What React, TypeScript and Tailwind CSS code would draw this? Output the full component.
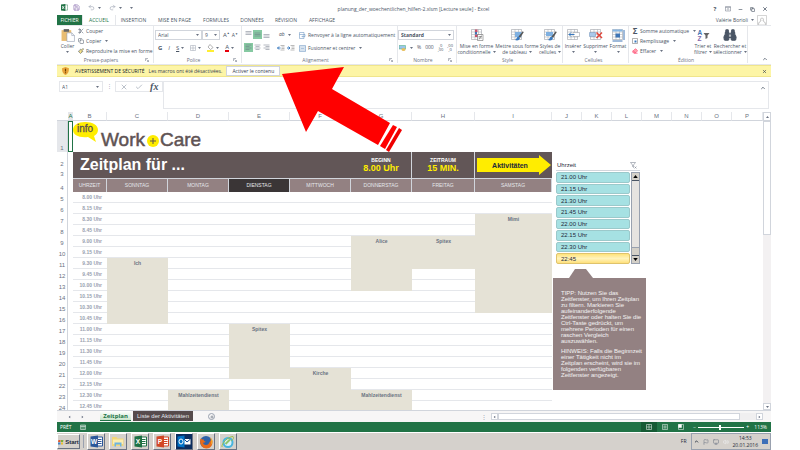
import React from "react";
import type { ReactNode } from "react";
import {
  Scissors,
  Copy,
  Paintbrush,
  Undo2,
  Redo2,
  Save,
  X,
  Check,
  Minus,
  Binoculars,
  Eraser,
  ChevronUp,
  Plus,
  Flag,
  Volume2,
  Monitor,
} from "lucide-react";

const SANS = "font-['Liberation_Sans',Arial,sans-serif]";
const UI = "font-['Open_Sans','Noto_Sans',sans-serif]";

function Caret() {
  return (
    <svg viewBox="0 0 6 4" className="h-[2px] w-[3px] shrink-0 fill-gray-500" aria-hidden="true">
      <path d="M0 0h6L3 4z" />
    </svg>
  );
}

function Launcher() {
  return (
    <svg viewBox="0 0 8 8" className="size-1 shrink-0 fill-none stroke-gray-500" aria-hidden="true">
      <path d="M1 6V1h5M3 3l4 4M7 4v3H4" />
    </svg>
  );
}

function Group({ label, className, launcher, children }: { label: string; className: string; launcher?: boolean; children: ReactNode }) {
  return (
    <section aria-label={label} className={`flex shrink-0 flex-col border-r border-gray-200 ${className}`}>
      <div className="flex min-h-0 flex-1">{children}</div>
      <div className="flex h-[6px] items-center pr-1 leading-none text-gray-500">
        <span className="flex-1 text-center">{label}</span>
        {launcher && <Launcher />}
      </div>
    </section>
  );
}

function BigButton({ icon, lines, className }: { icon: ReactNode; lines: string[]; className: string }) {
  const single = lines.length === 1;
  return (
    <button type="button" className={`flex shrink-0 flex-col items-center pt-[2px] leading-[6px] whitespace-nowrap ${className}`}>
      {icon}
      <span className="mt-px">{lines[0]}</span>
      <span className="flex h-[6px] items-center gap-[2px]">
        {!single && lines[1]}
        <Caret />
      </span>
    </button>
  );
}

function SmallButton({ icon, label, caret, className }: { icon: ReactNode; label: string; caret?: boolean; className?: string }) {
  return (
    <button type="button" className={`flex items-center gap-[2px] leading-none whitespace-nowrap ${className ?? "h-[10px]"}`}>
      {icon}
      <span>{label}</span>
      {caret && <span className="pl-[2px]"><Caret /></span>}
    </button>
  );
}

function PasteIcon() {
  return (
    <svg viewBox="0 0 26 26" className="size-[14px]" aria-hidden="true">
      <path d="M1 4h18v20H1z" fill="#e9bd72" />
      <path d="M5 2h10v5H5z" fill="#666" />
      <path d="M11 9h9l5 5v11H11z" fill="#fff" stroke="#8894a8" />
      <path d="M20 9v5h5" fill="none" stroke="#8894a8" />
    </svg>
  );
}

function GridIcon({ kind }: { kind: "cond" | "table" | "cell" | "insert" | "delete" | "format" }) {
  const styled = kind === "table" || kind === "cell";
  return (
    <svg viewBox="0 0 28 28" className="size-[14px]" aria-hidden="true">
      <path d="M3 3h20v20H3z" fill="#fff" stroke="#8b8f96" />
      <path d="M3 8h20M3 13h20M3 18h20M10 3v20M17 3v20" stroke="#a0a4aa" fill="none" />
      {kind === "cond" && (
        <>
          <path d="M10 3h5v5h-5zM10 13h7v5h-7z" fill="#c8506a" />
          <path d="M10 8h4v5h-4z" fill="#3f75b5" />
          <path d="M15 13h11v12H15z" fill="#fff" stroke="#555" />
          <path d="M17 17h7M17 20h7M18 23l5-8" stroke="#555" fill="none" />
        </>
      )}
      {styled && (
        <>
          <path d={kind === "table" ? "M10 8h13v10H10z" : "M6 8h14v8H6z"} fill="#7fb0e0" />
          <path d="M26 6l-9 11 3 3 7-11z" fill="#555" />
          <path d="M17 17c-4 1-3 5-7 7 4 2 9 1 10-4z" fill="#3878bd" />
        </>
      )}
      {kind === "insert" && (
        <>
          <path d="M14 9h13v8H14z" fill="#fff" stroke="#8b8f96" />
          <path d="M17 13H6m4-4l-4 4 4 4" stroke="#3878bd" strokeWidth="2" fill="none" />
        </>
      )}
      {kind === "delete" && (
        <>
          <path d="M1 9h12v8H1z" fill="#a8c8ea" stroke="#6d8fb5" />
          <path d="M15 9l11 11M26 9L15 20" stroke="#e0453a" strokeWidth="3" />
        </>
      )}
      {kind === "format" && (
        <>
          <path d="M3 3h20v4H3z" fill="#86b6e4" />
          <path d="M9 11h9v8H9z" fill="#3f75b5" />
          <path d="M26 4v20M3 26h20" stroke="#3f75b5" strokeWidth="2" />
        </>
      )}
    </svg>
  );
}

function AlignIcon({ variant, active }: { variant: "top" | "middle" | "bottom" | "left" | "center" | "right"; active?: boolean }) {
  const paths = {
    top: "M3 3h12M3 6h12M3 9h12",
    middle: "M3 6h12M3 9h12M3 12h12",
    bottom: "M3 9h12M3 12h12M3 15h12",
    left: "M3 4h12M3 7h8M3 10h12M3 13h8",
    center: "M3 4h12M5 7h8M3 10h12M5 13h8",
    right: "M3 4h12M7 7h8M3 10h12M7 13h8",
  };
  return (
    <button type="button" aria-label={variant} className={`grid size-[9px] shrink-0 place-items-center ${active ? "bg-[#86c9a2]" : ""}`}>
      <svg viewBox="0 0 18 18" className="size-[9px] fill-none stroke-gray-500" aria-hidden="true">
        <path d={paths[variant]} />
      </svg>
    </button>
  );
}

function IndentIcon({ flip }: { flip?: boolean }) {
  return (
    <svg viewBox="0 0 16 12" className="h-[6px] w-2" aria-hidden="true">
      <path d="M7 1h8M9 4h6M9 7h6M7 10h8" stroke="#777" fill="none" />
      <path d={flip ? "M0 6h6M3 3l3 3-3 3" : "M7 6H1M4 3L1 6l3 3"} stroke="#3878bd" strokeWidth="2" fill="none" />
    </svg>
  );
}

function TitleBar() {
  return (
    <header className="flex h-[15px] shrink-0 items-center pl-1 leading-none text-gray-600">
      <svg viewBox="0 0 16 16" className="size-[7px]" aria-hidden="true">
        <path d="M8 2h7v12H8z" fill="#fff" stroke="#217346" />
        <path d="M0 1l10-1v16L0 15z" fill="#217346" />
        <path d="M3 5l4 6M7 5l-4 6" stroke="#fff" strokeWidth="2" />
      </svg>
      <div className="ml-[5px] flex items-center gap-2">
        <Save className="size-[7px] text-[#8568ac]" />
        <span className="flex items-center gap-[3px]"><Undo2 className="size-[7px] text-gray-400" /><Caret /></span>
        <span className="flex items-center gap-[3px]"><Redo2 className="size-[7px] text-gray-400" /><Caret /></span>
        <Caret />
      </div>
      <h1 className="flex-1 pt-[3px] pl-[108px] text-center">planung_der_woechentlichen_hilfen-2.xlsm [Lecture seule] - Excel</h1>
      <div className="ml-[126px] flex items-center gap-[7px] pt-[3px] pr-[3px]">
        <button type="button" className="w-[6px] text-[6px] leading-none font-bold">?</button>
        <button type="button" aria-label="Options du ruban">
          <svg viewBox="0 0 12 12" className="size-[6px] fill-none stroke-gray-500"><path d="M1 1h10v9H1zM1 3h10M6 9V5M4 7l2-2 2 2" /></svg>
        </button>
        <button type="button" aria-label="Réduire"><Minus className="size-[5px]" strokeWidth={3} /></button>
        <button type="button" aria-label="Restaurer"><Copy className="size-[5px]" strokeWidth={3} /></button>
        <button type="button" aria-label="Fermer"><X className="size-[6px]" strokeWidth={3} /></button>
      </div>
    </header>
  );
}

function TabBar() {
  return (
    <nav className="flex h-[10px] shrink-0 items-stretch leading-none text-gray-600">
      <button type="button" className="w-[25px] bg-[#217346] text-white">FICHIER</button>
      <button type="button" className="w-[34px] border-x border-gray-200 text-[#217346]">ACCUEIL</button>
      <button type="button" className="w-[35px]">INSERTION</button>
      <button type="button" className="w-[47px]">MISE EN PAGE</button>
      <button type="button" className="w-[36px]">FORMULES</button>
      <button type="button" className="w-[36px]">DONNÉES</button>
      <button type="button" className="w-[32px]">RÉVISION</button>
      <button type="button" className="w-[40px]">AFFICHAGE</button>
      <div className="flex flex-1 items-center justify-end gap-[3px] pr-1">
        <span>Valérie Borioli</span>
        <Caret />
        <svg viewBox="0 0 20 20" className="size-[10px]" aria-hidden="true">
          <path d="M1 1h18v18H1z" fill="#fff" stroke="#aaa" />
          <path d="M3 19c0-5 3-6 5-7-4-8 8-8 4 0 2 1 5 2 5 7" fill="#fff" stroke="#888" />
        </svg>
      </div>
    </nav>
  );
}

function Select({ label, value, className }: { label: string; value: string; className: string }) {
  return (
    <div className={`flex h-[10px] items-center border border-gray-300 pr-[2px] ${className}`}>
      <select aria-label={label} defaultValue={value} className="w-full appearance-none bg-transparent pl-[2px] leading-none outline-none">
        <option>{value}</option>
      </select>
      <Caret />
    </div>
  );
}

function Ribbon() {
  return (
    <div className="flex h-[40px] shrink-0 border-y border-gray-200 pb-px leading-none text-gray-600">
      <Group label="Presse-papiers" launcher className="w-[97px]">
        <BigButton icon={<PasteIcon />} lines={["Coller"]} className="w-[21px]" />
        <div>
          <SmallButton icon={<Scissors className="size-[6px]" />} label="Couper" />
          <SmallButton icon={<Copy className="size-[6px]" />} label="Copier" caret />
          <SmallButton icon={<Paintbrush className="size-[6px] fill-amber-200" />} label="Reproduire la mise en forme" />
        </div>
      </Group>
      <Group label="Police" launcher className="w-[88px]">
        <div className="flex-1 pt-1 pl-px">
          <div className="flex items-center">
            <Select label="Police" value="Arial" className="w-[47px]" />
            <Select label="Taille" value="9" className="w-[18px]" />
            <button type="button" className="ml-[3px] flex text-[6px]">A<span className="text-[3px]">▲</span></button>
            <button type="button" className="ml-[2px] flex">A<span className="text-[3px]">▼</span></button>
          </div>
          <div className="flex h-[16px] items-center gap-[6px] pl-[3px] text-[6px]">
            <button type="button" className="font-bold">G</button>
            <button type="button" className="italic">I</button>
            <button type="button" className="flex items-center gap-[2px] underline">S<Caret /></button>
            <button type="button" aria-label="Bordures" className="flex items-center gap-[2px]">
              <svg viewBox="0 0 12 12" className="size-[6px] fill-none stroke-gray-400"><path d="M1 1h10v10H1zM1 6h10M6 1v10" /></svg>
              <Caret />
            </button>
            <button type="button" aria-label="Remplissage" className="flex items-center gap-[2px]">
              <svg viewBox="0 0 14 16" className="h-2 w-[7px]"><path d="M6 1l6 6-5 4-5-5z" fill="#fff" stroke="#666" /><path d="M0 12h14v4H0z" fill="#ffee32" /></svg>
              <Caret />
            </button>
            <button type="button" className="flex items-center gap-[2px]"><span className="border-b-2 border-red-600">A</span><Caret /></button>
          </div>
        </div>
      </Group>
      <Group label="Alignement" launcher className="w-[156px]">
        <div className="flex w-[55px] shrink-0 flex-col justify-start gap-1 pt-1 pl-[2px]">
          <div className="flex items-center">
            <AlignIcon variant="top" /><AlignIcon variant="middle" active /><AlignIcon variant="bottom" />
            <button type="button" className="ml-2 flex items-center gap-[3px] italic">ab<Caret /></button>
          </div>
          <div className="flex items-center">
            <AlignIcon variant="left" active /><AlignIcon variant="center" /><AlignIcon variant="right" />
            <span className="ml-[6px] flex gap-[2px]"><IndentIcon /><IndentIcon flip /></span>
          </div>
        </div>
        <div className="pt-1 pl-[2px]">
          <SmallButton
            icon={<svg viewBox="0 0 14 14" className="size-[7px] fill-none stroke-[#5a88bb]"><path d="M1 1h9v12H1zM1 5h11v4H6M8 7L6 9l2 2" /></svg>}
            label="Renvoyer à la ligne automatiquement"
          />
          <SmallButton
            icon={<svg viewBox="0 0 14 14" className="size-[7px] fill-none stroke-[#5a88bb]"><path d="M1 1h12v12H1zM1 4h12M1 10h12M3 7h8" /></svg>}
            label="Fusionner et centrer"
            caret
            className="h-[16px]"
          />
        </div>
      </Group>
      <Group label="Nombre" launcher className="w-[59px]">
        <div className="flex-1 pt-1">
          <Select label="Format de nombre" value="Standard" className="w-[56px] font-bold" />
          <div className="flex h-[15px] items-center gap-1 pl-px">
            <svg viewBox="0 0 14 12" className="h-[6px] w-[7px]" aria-hidden="true"><path d="M0 1h13v7H0z" fill="#9ac5e8" stroke="#4a7" /><ellipse cx="9" cy="9" rx="4" ry="3" fill="#e8c060" /></svg>
            <Caret />
            <button type="button">%</button>
            <button type="button">000</button>
            <button type="button" className="text-[4px] leading-none">,0<br />,00</button>
            <button type="button" className="text-[4px] leading-none">,00<br />,0</button>
          </div>
        </div>
      </Group>
      <Group label="Style" className="w-[106px]">
        <BigButton icon={<GridIcon kind="cond" />} lines={["Mise en forme", "conditionnelle"]} className="w-[39px]" />
        <BigButton icon={<GridIcon kind="table" />} lines={["Mettre sous forme", "de tableau"]} className="w-[42px]" />
        <BigButton icon={<GridIcon kind="cell" />} lines={["Styles de", "cellules"]} className="w-[24px]" />
      </Group>
      <Group label="Cellules" className="w-[66px]">
        <BigButton icon={<GridIcon kind="insert" />} lines={["Insérer"]} className="w-[20px]" />
        <BigButton icon={<GridIcon kind="delete" />} lines={["Supprimer"]} className="w-[25px]" />
        <BigButton icon={<GridIcon kind="format" />} lines={["Format"]} className="w-[20px]" />
      </Group>
      <Group label="Édition" className="w-[119px]">
        <div className="w-[64px] shrink-0 pl-[3px]">
          <SmallButton icon={<span className="w-[6px] text-[8px] leading-none font-bold">Σ</span>} label="Somme automatique" caret />
          <SmallButton
            icon={<svg viewBox="0 0 12 12" className="size-[6px]"><path d="M1 1h10v10H1z" fill="#fff" stroke="#666" /><path d="M5 5h4v4H5z" fill="#3878bd" /></svg>}
            label="Remplissage"
            caret
          />
          <SmallButton icon={<Eraser className="size-[6px] fill-rose-300 text-rose-500" />} label="Effacer" caret />
        </div>
        <BigButton
          icon={
            <svg viewBox="0 0 28 28" className="size-[14px] shrink-0" aria-hidden="true">
              <text x="3" y="13" fontSize="13" fontWeight="bold" fontFamily="Liberation Sans" fill="#3f75b5">A</text>
              <text x="3" y="26" fontSize="13" fontWeight="bold" fontFamily="Liberation Sans" fill="#8568ac">Z</text>
              <path d="M15 10h12l-4 5v5l-4 2v-7z" fill="#666" />
            </svg>
          }
          lines={["Trier et", "filtrer"]}
          className="w-[20px]"
        />
        <BigButton icon={<Binoculars className="size-[14px] fill-gray-600 text-gray-600" />} lines={["Rechercher et", "sélectionner"]} className="w-[34px]" />
      </Group>
      <div className="flex flex-1 items-end justify-end pr-[3px] pb-px">
        <button type="button" aria-label="Réduire le ruban"><ChevronUp className="size-[6px]" strokeWidth={3} /></button>
      </div>
    </div>
  );
}

function SecurityBar() {
  return (
    <div className="flex h-[12px] shrink-0 items-center border-y border-[#f0e58c] bg-[#fdf5a6] leading-none text-gray-700">
      <svg viewBox="0 0 12 14" className="mr-[6px] ml-[5px] h-2 w-[7px]" aria-hidden="true">
        <path d="M6 0l6 2c0 6-1 9-6 12C1 11 0 8 0 2z" fill="#e8a33a" />
        <path d="M6 3v5M6 9v2" stroke="#6b4200" strokeWidth="2" />
      </svg>
      <strong className="pr-1 font-normal text-gray-900">AVERTISSEMENT DE SÉCURITÉ</strong>
      <span>Les macros ont été désactivées.</span>
      <button type="button" className="ml-1 h-[10px] w-[54px] border border-gray-300 bg-white whitespace-nowrap">Activer le contenu</button>
      <button type="button" aria-label="Fermer l'avertissement" className="mr-1 ml-auto"><X className="size-[5px]" strokeWidth={3} /></button>
    </div>
  );
}

function FormulaBar() {
  return (
    <div className="flex h-[32px] shrink-0 items-start pt-1 pl-[2px] text-gray-600">
      <div className="flex h-[11px] w-[44px] items-center border border-gray-200 pr-[3px]">
        <input aria-label="Zone Nom" defaultValue="A1" className="w-full min-w-0 pl-[2px] leading-none outline-none" />
        <Caret />
      </div>
      <span className="w-[12px] text-center leading-[10px] text-gray-400">⋮</span>
      <div className="flex h-[11px] w-[48px] items-center justify-around border border-gray-200">
        <X className="size-2 text-gray-400" />
        <Check className="size-2 text-gray-400" />
        <span className="font-['Liberation_Serif',serif] text-[10px] leading-none font-bold italic">fx</span>
      </div>
      <div className="mr-[2px] flex h-[28px] flex-1 border border-gray-200">
        <textarea aria-label="Barre de formule" className="flex-1 resize-none outline-none" />
        <ChevronUp className="mt-[3px] mr-[2px] size-[6px]" strokeWidth={3} />
      </div>
    </div>
  );
}

const HEAD = ["B", "C", "D", "E", "F", "G", "H", "I", "J", "K", "L", "M", "N", "O", "P"];
const DAYS = ["SONNTAG", "MONTAG", "DIENSTAG", "MITTWOCH", "DONNERSTAG", "FREITAG", "SAMSTAG"];
const FIRST_ROW = 5;
const TIMES = Array.from({ length: 20 }, (_, i) => `${8 + Math.floor(i / 4)}.${["00", "15", "30", "45"][i % 4]} Uhr`);

type Entry = { day: number; row: number; span: number; name: string };
const ENTRIES: Entry[] = [
  { day: 0, row: 11, span: 6, name: "Ich" },
  { day: 1, row: 23, span: 2, name: "Mahlzeitendienst" },
  { day: 2, row: 17, span: 5, name: "Spitex" },
  { day: 3, row: 21, span: 4, name: "Kirche" },
  { day: 4, row: 9, span: 5, name: "Alice" },
  { day: 4, row: 23, span: 2, name: "Mahlzeitendienst" },
  { day: 5, row: 9, span: 3, name: "Spitex" },
  { day: 6, row: 7, span: 9, name: "Mimi" },
];

function Logo() {
  return (
    <svg viewBox="0 0 132 31" className="block h-[31px] w-[132px]" role="img" aria-label="info Work+Care">
      <path d="M12 1C20 1 25 4 25 9c0 3-2 5-4 6l2 6-8-5C6 17 0 14 0 9c0-5 5-8 12-8z" fill="#ffed00" />
      <text x="4" y="11" fontSize="10" fontFamily="Liberation Sans" fill="#5a4f50" stroke="#5a4f50" strokeWidth="0.3">info</text>
      <g fontSize="19" fontFamily="Liberation Sans" fill="#5f5354" stroke="#5f5354" strokeWidth="0.5">
        <text x="28" y="25">Work</text>
        <text x="87" y="25">Care</text>
      </g>
      <circle cx="80" cy="20" r="6" fill="#ffed00" />
      <path d="M80 17v6M77 20h6" stroke="#5f5354" strokeWidth="1" />
    </svg>
  );
}

function RowNumber({ n }: { n: number }) {
  return (
    <th scope="row" className={`border-r border-gray-300 p-0 text-center align-bottom text-[6px] leading-[8px] font-normal text-gray-500 ${n === 1 ? "bg-gray-200" : ""}`}>
      {n}
    </th>
  );
}

function Schedule() {
  return (
    <table className={`w-full table-fixed border-separate border-spacing-0 leading-none ${SANS}`}>
      <colgroup>
        <col className="w-[11px]" />
        <col className="w-[5px]" />
        <col className="w-[34px]" />
        <col className="w-[61px]" />
        <col className="w-[61px]" />
        <col className="w-[61px]" />
        <col className="w-[61px]" />
        <col className="w-[61px]" />
        <col className="w-[63px]" />
        <col className="w-[77px]" />
        <col span={6} className="w-[30px]" />
        <col />
      </colgroup>
      <thead>
        <tr className="h-[9px] text-[6px] text-gray-500">
          <td className="border-b border-gray-300 p-0" />
          <th className="border-b border-gray-300 bg-gray-200 p-0 font-normal text-[#217346]">A</th>
          {HEAD.map((c) => (
            <th key={c} className="border-r border-b border-gray-300 border-r-gray-200 p-0 font-normal">{c}</th>
          ))}
        </tr>
      </thead>
      <tbody>
        <tr className="h-[31px]">
          <RowNumber n={1} />
          <td className="border border-[#217346] p-0" />
          <td colSpan={15} className="p-0 align-top"><Logo /></td>
        </tr>
        <tr className="h-[16px]">
          <RowNumber n={2} />
          <td rowSpan={2} className="p-0" />
          <td rowSpan={2} colSpan={5} className="bg-[#625657] p-0 pl-[7px] text-[16px] font-bold text-white">Zeitplan für ...</td>
          <td rowSpan={2} className="border-r border-gray-300 bg-[#625657] p-0 text-center font-bold text-white">
            BEGINN<div className="pt-px text-[9px] text-[#ffed00]">8.00 Uhr</div>
          </td>
          <td rowSpan={2} className="border-r border-gray-300 bg-[#625657] p-0 text-center font-bold text-white">
            ZEITRAUM<div className="pt-px text-[9px] text-[#ffed00]">15 MIN.</div>
          </td>
          <td rowSpan={2} className="bg-[#625657] p-0 pr-px pl-[2px]">
            <a href="#aktivitaeten" className="grid h-[20px] items-center text-center text-[7px] font-bold text-gray-800">
              <svg viewBox="0 0 74 20" preserveAspectRatio="none" className="col-start-1 row-start-1 h-[20px] w-full" aria-hidden="true">
                <path d="M0 3h62V0l12 10-12 10v-3H0z" fill="#ffed00" />
              </svg>
              <span className="col-start-1 row-start-1 pr-2">Aktivitäten</span>
            </a>
          </td>
        </tr>
        <tr className="h-[10px]">
          <RowNumber n={3} />
        </tr>
        <tr className="h-[14px] text-gray-200">
          <RowNumber n={4} />
          <td className="p-0" />
          <th className="border-t border-r border-gray-300 bg-[#938182] p-0 font-normal">UHRZEIT</th>
          {DAYS.map((d) => (
            <th key={d} className={`border-t border-r border-gray-300 p-0 font-normal ${d === "DIENSTAG" ? "bg-[#3a3536]" : "bg-[#938182]"}`}>{d}</th>
          ))}
        </tr>
        {TIMES.map((time, i) => {
          const row = FIRST_ROW + i;
          return (
            <tr key={time} className="h-[11px]">
              <RowNumber n={row} />
              <td className="p-0" />
              <td className="border-b border-gray-200 p-0 pr-[5px] text-right font-bold whitespace-nowrap text-gray-400">{time}</td>
              {DAYS.map((d, day) => {
                const entry = ENTRIES.find((e) => e.day === day && row >= e.row && row < e.row + e.span);
                if (!entry) return <td key={d} className="border-b border-gray-200 p-0" />;
                if (entry.row !== row) return null;
                return (
                  <td key={d} rowSpan={entry.span} className="bg-[#e5e2d6] p-0 pt-[3px] text-center align-top font-bold text-gray-500">
                    {entry.name}
                  </td>
                );
              })}
            </tr>
          );
        })}
      </tbody>
    </table>
  );
}

const SLOTS = ["21.00 Uhr", "21.15 Uhr", "21.30 Uhr", "21.45 Uhr", "22.00 Uhr", "22.15 Uhr", "22.30 Uhr", "22:45"];

function Slicer() {
  return (
    <div className={`absolute top-[48px] left-[499px] w-[84px] text-[6px] leading-none text-gray-800 ${SANS}`}>
      <div className="flex h-[11px] items-center justify-between border-b border-gray-300 px-px">
        <span>Uhrzeit</span>
        <svg viewBox="0 0 14 14" className="mr-[2px] size-[7px] fill-none stroke-gray-500" aria-label="Filter löschen"><path d="M1 1h10L7 6v5L5 9V6zM9 9l4 4M13 9l-4 4" /></svg>
      </div>
      <div className="flex h-[93px] justify-between pt-px">
        <div className="grid w-[74px] auto-rows-fr gap-px">
          {SLOTS.map((s) => (
            <button
              type="button"
              key={s}
              className={`rounded-[2px] border pl-1 text-left ${s === "22:45" ? "border-[#dfc36c] bg-linear-to-b from-[#ffe37a] via-[#fff3bb] to-[#ffe07a]" : "border-[#9bc9cb] bg-[#a6e1e3]"}`}
            >
              {s}
            </button>
          ))}
        </div>
        <div className="flex w-[9px] flex-col items-stretch border border-gray-400 bg-[#e6e3e0]">
          <span className="grid h-2 place-items-center border-b border-gray-600 bg-[#d4d0c8]">
            <svg viewBox="0 0 6 4" className="h-[3px] w-[5px]" aria-hidden="true"><path d="M0 4h6L3 0z" /></svg>
          </span>
          <span className="mt-auto h-2 border-t border-gray-400 bg-[#d4d0c8]" />
          <span className="grid h-2 place-items-center border-t border-gray-600 bg-[#d4d0c8]">
            <svg viewBox="0 0 6 4" className="h-[3px] w-[5px]" aria-hidden="true"><path d="M0 0h6L3 4z" /></svg>
          </span>
        </div>
      </div>
    </div>
  );
}

const TIP = [
  "TIPP: Nutzen Sie das",
  "Zeitfenster, um Ihren Zeitplan",
  "zu filtern. Markieren Sie",
  "aufeinanderfolgende",
  "Zeitfenster oder halten Sie die",
  "Ctrl-Taste gedrückt, um",
  "mehrere Perioden für einen",
  "raschen Vergleich",
  "auszuwählen.",
];
const NOTE = [
  "HINWEIS: Falls die Beginnzeit",
  "einer Tätigkeit nicht im",
  "Zeitplan erscheint, wird sie im",
  "folgenden verfügbaren",
  "Zeitfenster angezeigt.",
];

function Paragraph({ lines }: { lines: string[] }) {
  return (
    <p>
      {lines.map((line) => (
        <span key={line} className="block">{line}</span>
      ))}
    </p>
  );
}

function Tip() {
  return (
    <aside className={`absolute top-[157px] left-[496px] w-[93px] text-[6px] text-white/90 ${SANS}`}>
      <svg viewBox="0 0 24 9" className="ml-4 block h-[9px] w-6 fill-[#938182]" aria-hidden="true"><path d="M0 9L6 0h11l7 9z" /></svg>
      <div className="space-y-1 bg-[#938182] py-3 pl-2 leading-[6px] whitespace-nowrap">
        <Paragraph lines={TIP} />
        <Paragraph lines={NOTE} />
      </div>
    </aside>
  );
}

function PointerArrow() {
  return (
    <svg viewBox="0 0 122 86" className="absolute top-[67px] left-[281px] h-[86px] w-[122px]" aria-hidden="true">
      <path d="M1 7L63 0 51 22 109 56 97 78 37 44 25 65z" fill="#f00" />
      <path d="M112 58L116 60 104 82 99 79z" fill="#f00" />
      <path d="M118 61L121 63 108 85 105 83z" fill="#e00" />
    </svg>
  );
}

function VerticalScroll() {
  return (
    <div className="flex w-2 shrink-0 flex-col bg-[#f3f1f2]">
      <span className="grid h-[9px] place-items-center border border-gray-300 bg-white"><span className="rotate-180"><Caret /></span></span>
      <span className="h-[114px] border border-gray-300 bg-white" />
      <span className="mt-auto grid h-[7px] place-items-center border border-gray-300 bg-white"><Caret /></span>
    </div>
  );
}

function SheetTabs() {
  return (
    <div className="flex h-[12px] shrink-0 items-stretch border-t border-gray-300 bg-[#f7f6f6] text-[6px] leading-none">
      <div className="flex w-[43px] items-center gap-[10px] pl-[11px]">
        <span className="rotate-90"><Caret /></span>
        <span className="-rotate-90"><Caret /></span>
      </div>
      <button type="button" className="mb-px w-[31px] border-b border-[#217346] bg-linear-to-b from-white to-[#c9e5cc] font-bold text-[#217346]">Zeitplan</button>
      <button type="button" className={`mb-px ml-[2px] w-[60px] bg-[#564b4c] whitespace-nowrap text-gray-200 ${SANS}`}>Liste der Aktivitäten</button>
      <button type="button" aria-label="Nouvelle feuille" className="my-auto ml-[15px] grid size-[7px] place-items-center rounded-full border border-gray-400"><Plus className="size-1 text-gray-500" strokeWidth={4} /></button>
      <span className="ml-auto self-center pr-1 text-gray-400">⋮</span>
      <div className="my-[2px] mr-2 flex w-[272px] items-stretch bg-[#f0eff0]">
        <span className="grid w-[7px] place-items-center border border-gray-300 bg-white"><span className="rotate-90"><Caret /></span></span>
        <span className="mr-4 flex-1 border border-gray-300 bg-white" />
        <span className="grid w-[7px] place-items-center border border-gray-300 bg-white"><span className="-rotate-90"><Caret /></span></span>
      </div>
    </div>
  );
}

function StatusBar() {
  return (
    <div className="flex h-[10px] shrink-0 items-center bg-[#217346] pr-1 pl-[3px] leading-none text-white">
      <span>PRÊT</span>
      <svg viewBox="0 0 12 12" className="ml-2 size-[6px] fill-none stroke-white"><path d="M1 2h10v9H1zM1 5h10M4 2v9M8 2v9" /></svg>
      <div className="ml-auto flex items-stretch self-stretch">
        <button type="button" aria-label="Normal" className="grid w-4 place-items-center bg-[#165a34]"><svg viewBox="0 0 12 12" className="size-[6px] fill-none stroke-white"><path d="M1 1h10v10H1zM1 6h10M6 1v10" /></svg></button>
        <button type="button" aria-label="Mise en page" className="grid w-4 place-items-center"><svg viewBox="0 0 12 12" className="size-[6px] fill-none stroke-white"><path d="M1 1h10v10H1zM3 4h6M3 6h6M3 8h6" /></svg></button>
        <button type="button" aria-label="Sauts de page" className="grid w-4 place-items-center"><svg viewBox="0 0 12 12" className="size-[6px] fill-none stroke-white"><path d="M1 1h10v10H1z" /><path d="M1 1h6v6H1z" fill="#fff" /></svg></button>
      </div>
      <span className="pl-1">−</span>
      <input
        type="range"
        aria-label="Zoom"
        min={0}
        max={100}
        defaultValue={47}
        className="mx-[2px] h-[6px] w-[46px] appearance-none bg-[linear-gradient(white,white)] bg-[length:100%_1px] bg-center bg-no-repeat [&::-webkit-slider-thumb]:h-[5px] [&::-webkit-slider-thumb]:w-[2px] [&::-webkit-slider-thumb]:appearance-none [&::-webkit-slider-thumb]:bg-white"
      />
      <span>+</span>
      <span className="w-[18px] text-right">113%</span>
    </div>
  );
}

function OfficeIcon({ letter, fill }: { letter: string; fill: string }) {
  return (
    <svg viewBox="0 0 26 26" className="size-[13px]" aria-hidden="true">
      <path d="M12 4h13v18H12z" fill="#fff" stroke={fill} strokeWidth="2" />
      <path d="M15 9h8M15 13h8M15 17h8" stroke={fill} strokeWidth="2" />
      <path d="M1 3l15-2v24L1 23z" fill={fill} />
      <text x="8" y="18" textAnchor="middle" fontSize="13" fontWeight="bold" fontFamily="Liberation Sans" fill="#fff">{letter}</text>
    </svg>
  );
}

function Taskbar() {
  const apps: { name: string; icon: ReactNode; active?: boolean }[] = [
    { name: "Word", icon: <OfficeIcon letter="W" fill="#2b579a" /> },
    {
      name: "Explorateur",
      icon: (
        <svg viewBox="0 0 28 26" className="h-[13px] w-[14px]">
          <path d="M2 4h9l2 3h12v15H2z" fill="#f3d779" />
          <path d="M4 9h20v9H4z" fill="#fbedb0" />
          <path d="M7 15h14v8h-3v-4h-8v4H7z" fill="#6db3e0" />
        </svg>
      ),
    },
    { name: "Excel", icon: <OfficeIcon letter="X" fill="#1e7145" /> },
    { name: "PowerPoint", icon: <OfficeIcon letter="P" fill="#d24726" /> },
    {
      name: "Outlook",
      active: true,
      icon: (
        <svg viewBox="0 0 28 26" className="h-[13px] w-[14px]">
          <path d="M14 8h13v11H14z" fill="#fff" />
          <path d="M14 8l6 6 7-6" stroke="#0a4a8f" fill="none" strokeWidth="2" />
          <path d="M1 3l14-2v24L1 23z" fill="#0072c6" />
          <ellipse cx="8" cy="13" rx="4" ry="5" fill="none" stroke="#fff" strokeWidth="2" />
        </svg>
      ),
    },
    {
      name: "Firefox",
      icon: (
        <svg viewBox="0 0 28 28" className="size-[14px]">
          <circle cx="14" cy="14" r="12" fill="#2f62a8" />
          <path d="M3 7C0 18 6 27 15 27c8 0 13-7 12-15-1-4-3-6-5-7 2 3 2 5 1 7-2-1-2 8-9 8-4 0-6-3-6-5 2 1 5 0 5-2-3 0-4-2-3-4-2 0-4 0-7-2z" fill="#e66a1c" />
          <path d="M22 5c3 4 4 10 1 15 6-5 4-12-1-15z" fill="#f9bb2d" />
        </svg>
      ),
    },
    {
      name: "Internet Explorer",
      icon: (
        <svg viewBox="0 0 28 28" className="size-[14px]">
          <circle cx="14" cy="15" r="9" fill="#d9f2fa" stroke="#48b4de" strokeWidth="4" />
          <path d="M9 18L18 9" stroke="#8fc46a" strokeWidth="4" />
          <path d="M2 24C0 18 14 3 24 3c3 3-1 7-4 9" fill="none" stroke="#9bbf4a" strokeWidth="2" />
        </svg>
      ),
    },
  ];
  return (
    <footer className="flex h-[18px] shrink-0 items-stretch border-t border-white bg-[#d5d1cc] leading-none text-gray-800">
      <button type="button" className={`my-px flex w-[23px] items-center justify-center gap-px border border-gray-500 border-t-white border-l-white text-[6px] font-bold ${SANS}`}>
        <svg viewBox="0 0 12 12" className="size-[6px] shrink-0" aria-hidden="true">
          <path d="M1 2h4v4H0z" fill="#e25b30" /><path d="M6 2h5l-1 4H6z" fill="#7ab03c" /><path d="M0 7h5v4H0z" fill="#4484c6" /><path d="M6 7h4v4H6z" fill="#f0c030" />
        </svg>
        Start
      </button>
      <span className="mx-[3px] my-[2px] w-px bg-gray-400" />
      <div className="flex items-stretch gap-1">
        {apps.map((a) => (
          <button type="button" key={a.name} aria-label={a.name} className={`grid w-[18px] place-items-center border border-gray-500 border-t-white border-l-white ${a.active ? "bg-[#0b2d5e]" : ""}`}>
            {a.icon}
          </button>
        ))}
      </div>
      <span className="ml-auto self-center pr-1">FR</span>
      <div className="flex items-center gap-[4px] border border-gray-400 px-[2px]">
        <ChevronUp className="size-[5px]" strokeWidth={4} />
        <Flag className="size-[6px] text-gray-500" />
        <Monitor className="size-[6px] text-gray-500" />
        <Volume2 className="size-[6px] text-gray-100" />
        <time className="text-center leading-[7px]">14:53<br />20.01.2016</time>
        <span className="h-[5px] w-[6px] bg-[#3d6fb8]" />
      </div>
    </footer>
  );
}

export default function App() {
  return (
    <div className="relative h-screen overflow-hidden bg-white pr-[29px] pl-[57px]">
      <main className={`flex h-full flex-col text-[5px] ${UI}`}>
        <TitleBar />
        <TabBar />
        <Ribbon />
        <SecurityBar />
        <FormulaBar />
        <div className="flex min-h-0 flex-1 pt-[3px]">
          <div className="relative min-w-0 flex-1 overflow-hidden">
            <Schedule />
            <Slicer />
            <Tip />
          </div>
          <VerticalScroll />
        </div>
        <SheetTabs />
        <StatusBar />
        <Taskbar />
      </main>
      <PointerArrow />
    </div>
  );
}
